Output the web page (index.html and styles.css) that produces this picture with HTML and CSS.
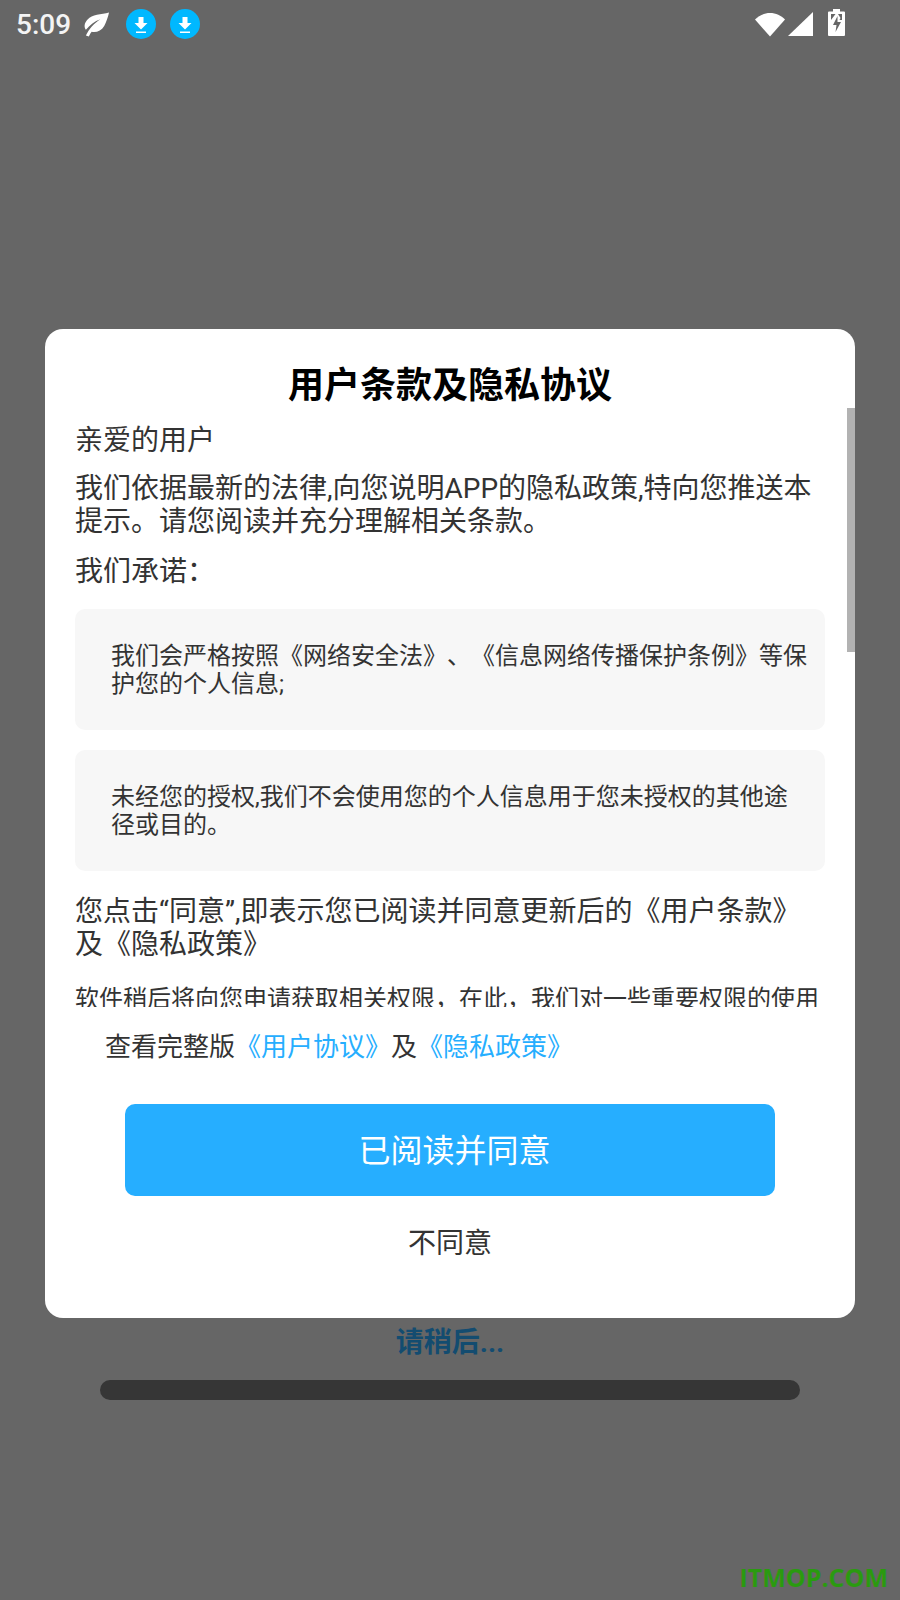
FILE: index.html
```html
<!DOCTYPE html>
<html lang="zh-CN">
<head>
  <meta charset="UTF-8" />
  <meta name="viewport" content="width=device-width, initial-scale=1.0"/>
  <title>用户条款及隐私协议</title>
  <link rel="stylesheet" href="styles.css">
</head>
<body>

<div class="screen">
  <div class="statusbar">
    <div class="status-left">
      <span class="time">5:09</span>
      <svg class="leaf" width="27" height="26" viewBox="0 0 28 26">
        <path fill="#fff" d="M27 1C19 3 9 3 5 8 1 12 1 16 3 19 7 14 12 10 18 8 12 12 6 18 3 25L6 26C7 24 8 22 9 21 14 22 19 20 22 15 24 11 26 6 27 1Z"/>
      </svg>
      <svg class="dl" width="30" height="30" viewBox="0 0 30 30">
        <circle cx="15" cy="15" r="15" fill="#00b8ff"/>
        <path fill="#fff" d="M12.500 8h5v6h4L15 20.500 8.500 14h4zM10 22.500h10V24H10z"/>
      </svg>
      <svg class="dl" width="30" height="30" viewBox="0 0 30 30">
        <circle cx="15" cy="15" r="15" fill="#00b8ff"/>
        <path fill="#fff" d="M12.500 8h5v6h4L15 20.500 8.500 14h4zM10 22.500h10V24H10z"/>
      </svg>
    </div>
    <div class="status-right">
      <svg width="30" height="26" viewBox="0 0 30 26">
        <path fill="#fff" d="M15 25.500 0 8.500C4 4.500 9 2 15 2s11 2.500 15 6.500z"/>
      </svg>
      <svg width="25" height="25" viewBox="0 0 25 25">
        <path fill="#fff" d="M25 0V24H0z"/>
      </svg>
      <svg class="battery" width="17" height="27" viewBox="0 0 17 27">
        <path fill="#fff" d="M5 0h7v2.500h4A1 1 0 0 1 17 3.500V26a1 1 0 0 1-1 1H1a1 1 0 0 1-1-1V3.500a1 1 0 0 1 1-1h4z"/>
        <path fill="#666" d="M3 5h4.500L3 11zM10 5h4v6h-2.500l1 -2zM9.500 7 5 16h3.500l-1 7L13 13H9.500z"/>
      </svg>
    </div>
  </div>

  <div class="loading">
    <div class="loading-text">请稍后...</div>
    <div class="progress"></div>
  </div>

  <div class="watermark">ITMOP.COM</div>

  <div class="modal">
    <h2 class="modal-title">用户条款及隐私协议</h2>
    <div class="terms">
      <p class="greeting">亲爱的用户</p>
      <p class="para">我们依据最新的法律,向您说明APP的隐私政策,特向您推送本提示。请您阅读并充分理解相关条款。</p>
      <p class="para">我们承诺：</p>
      <div class="promise">我们会严格按照《网络安全法》、《信息网络传播保护条例》等保护您的个人信息;</div>
      <div class="promise">未经您的授权,我们不会使用您的个人信息用于您未授权的其他途径或目的。</div>
      <p class="para agree-note">您点击“同意”,即表示您已阅读并同意更新后的《用户条款》及《隐私政策》</p>
      <p class="small">软件稍后将向您申请获取相关权限，在此，我们对一些重要权限的使用</p>
    </div>
    <div class="scroll-thumb"></div>
    <div class="links">查看完整版<a class="link">《用户协议》</a>及<a class="link">《隐私政策》</a></div>
    <button class="btn-agree">已阅读并同意</button>
    <button class="btn-refuse">不同意</button>
  </div>
</div>

</body>
</html>
```

FILE: styles.css
```css
* {
  box-sizing: border-box;
}

body {
  margin: 0;
  font-family: Roboto, "Noto Sans CJK SC", sans-serif;
  text-spacing-trim: space-all;
  background: #666;
}

.screen {
  position: relative;
  width: 900px;
  height: 1600px;
  overflow: hidden;
  background: #666;
}

.statusbar {
  height: 50px;
  display: flex;
  justify-content: space-between;
  align-items: center;
  padding: 0 55px 2px 16px;
}

.status-left,
.status-right {
  display: flex;
  align-items: center;
}

.time {
  font-family: Roboto, sans-serif;
  font-size: 28px;
  font-weight: 500;
  color: #f4f4f4;
  width: 67px;
}

.leaf {
  margin-right: 16px;
}

.dl {
  margin-right: 14px;
}

.status-right svg {
  margin-left: 3px;
}

.status-right .battery {
  margin: -3px 0 0 15px;
}

.loading {
  padding-top: 1273px;
  display: flex;
  flex-direction: column;
  align-items: center;
}

.loading-text {
  font-size: 28px;
  font-weight: 700;
  line-height: 40px;
  color: #134c70;
}

.progress {
  width: 700px;
  height: 20px;
  margin-top: 17px;
  border-radius: 10px;
  background: #363636;
}

.watermark {
  position: absolute;
  right: 12px;
  bottom: 6px;
  font-family: "Open Sans", sans-serif;
  font-weight: 700;
  font-size: 25px;
  color: #2a9a10;
}

.modal {
  position: absolute;
  left: 45px;
  top: 329px;
  width: 810px;
  height: 989px;
  background: #fff;
  border-radius: 18px;
  display: flex;
  flex-direction: column;
  align-items: center;
}

.modal-title {
  margin: 35px 0 0;
  font-size: 36px;
  line-height: 44px;
  font-weight: 700;
  color: #000;
}

.terms {
  width: 100%;
  height: 599px;
  padding: 11px 30px 0;
  overflow: hidden;
  color: #333;
}

.terms p {
  margin: 0;
}

.greeting {
  font-size: 28px;
  line-height: 43px;
}

.para {
  font-size: 28px;
  line-height: 33px;
  padding-top: 10px;
  padding-bottom: 7px;
}

.promise {
  margin-top: 20px;
  min-height: 121px;
  padding: 33px 16px 0 36px;
  font-size: 24px;
  line-height: 28px;
  background: #f7f7f7;
  border-radius: 10px;
}

.para + .promise {
  margin-top: 14px;
}

.agree-note {
  padding-top: 24px;
}

.terms .small {
  font-size: 24px;
  line-height: 28px;
  margin-top: 17px;
}

.scroll-thumb {
  position: absolute;
  right: 0;
  top: 79px;
  width: 8px;
  height: 244px;
  background: #b2b2b2;
}

.links {
  width: 100%;
  padding-left: 60px;
  margin-top: 22px;
  font-size: 26px;
  line-height: 36px;
  color: #333;
}

.link {
  color: #26aeff;
}

.btn-agree {
  width: 650px;
  height: 92px;
  margin-top: 39px;
  border: none;
  border-radius: 10px;
  background: #26aeff;
  color: #fff;
  font-family: inherit;
  font-size: 32px;
  padding: 0 6px 4px 15px;
}

.btn-refuse {
  margin-top: 25px;
  border: none;
  background: none;
  padding: 0;
  font-family: inherit;
  font-size: 28px;
  line-height: 46px;
  color: #333;
}
```
